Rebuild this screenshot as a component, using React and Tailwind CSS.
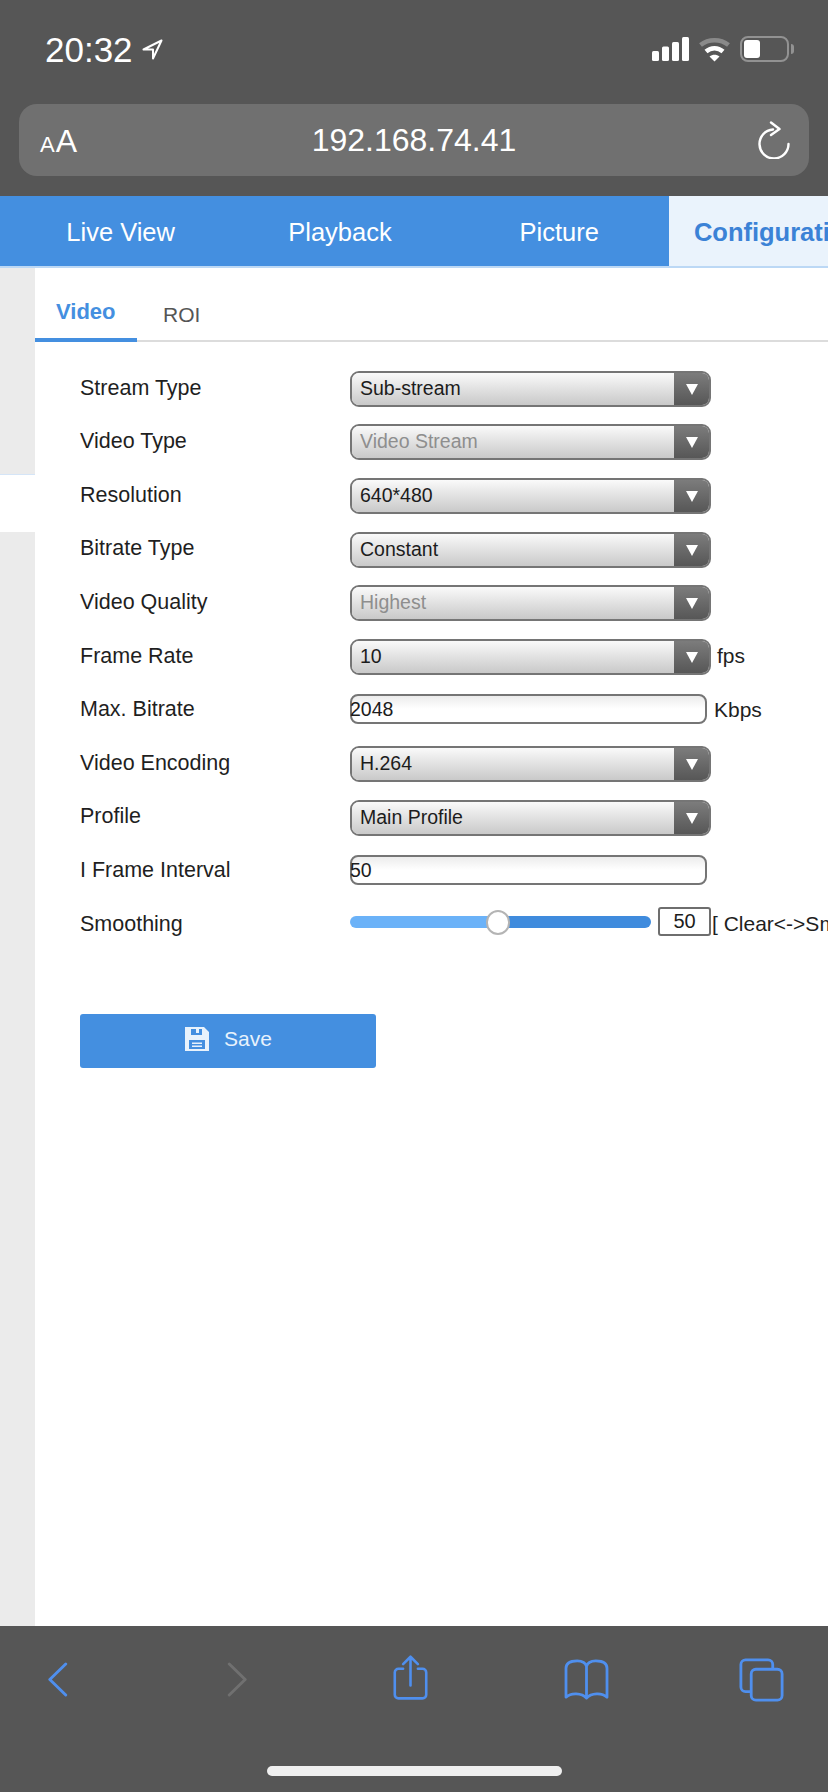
import { useState } from 'react';

const NAV = ['Live View', 'Playback', 'Picture'];

function SelectBox({ value, disabled }) {
  return (
    <div className="flex h-[36px] w-[361px] overflow-hidden rounded-[9px] border-2 border-[#757575]">
      <div className={`flex-1 bg-linear-to-b from-[#fafafa] to-[#c9c9c9] pl-[8px] text-[19.5px] leading-[31px] ${disabled ? 'text-[#8e8e8e]' : 'text-[#1c1c1c]'}`}>
        {value}
      </div>
      <div className="flex w-[35px] items-center justify-center bg-linear-to-b from-[#7c7c7c] to-[#575757] pt-[1px]">
        <svg width="14" height="13" viewBox="0 0 14 13">
          <path d="M1 1h12L7 12z" fill="#fff" />
        </svg>
      </div>
    </div>
  );
}

function TextBox({ value }) {
  return (
    <div className="mb-[2px] h-[30px] w-[357px] rounded-[8px] border-2 border-[#757575] bg-linear-to-b from-[#ececec] via-white to-white text-[19.5px] leading-[27px] text-[#1c1c1c] [text-indent:-2px]">
      {value}
    </div>
  );
}

function Row({ label, children }) {
  return (
    <div className="flex h-[53.6px] items-center">
      <div className="w-[270px] shrink-0 pb-[2px] text-[21.5px] text-[#1f1f1f]">{label}</div>
      {children}
    </div>
  );
}

function StatusBar() {
  return (
    <div className="flex h-[26px] items-center justify-between pl-[45px] pr-[34px]">
      <div className="flex items-center gap-[9px] text-white">
        <span className="text-[35px] leading-none">20:32</span>
        <svg width="21" height="21" viewBox="0 0 21 21" fill="none" stroke="#fff" strokeWidth="2" strokeLinejoin="round">
          <path d="M19.500 1.500 1.500 10.500h9.500v9z" />
        </svg>
      </div>
      <div className="flex items-center">
        <svg width="38" height="24" viewBox="0 0 38 24" fill="#fff">
          <rect x="0" y="14" width="7" height="10" rx="1.5" />
          <rect x="10" y="9.5" width="7" height="14.5" rx="1.5" />
          <rect x="20" y="5" width="7" height="19" rx="1.5" />
          <rect x="30" y="0" width="7" height="24" rx="1.5" />
        </svg>
        <svg className="ml-[8px]" width="33" height="25" viewBox="0 0 33 25" fill="none">
          <path d="M2.500 8C10.500 1.500 22.500 1.500 30.500 8" stroke="#8a8a8a" strokeWidth="4.500" />
          <path d="M8 14.500c5-4.400 12-4.400 17 0" stroke="#fff" strokeWidth="4.500" />
          <path d="M11.500 19.500 16.500 24.500l5-5c-3-2.300-7-2.300-10 0z" fill="#fff" />
        </svg>
        <div className="ml-[9px] flex h-[26px] w-[49px] items-center rounded-[8px] border-2 border-[#929292] p-[2px]">
          <div className="h-[18px] w-[16px] rounded-[3px] bg-white" />
        </div>
        <div className="ml-[2px] h-[10px] w-[3px] rounded-r-[3px] bg-[#929292]" />
      </div>
    </div>
  );
}

function Toolbar() {
  const blue = '#4f8fee';
  return (
    <div className="relative h-[166px] shrink-0 bg-[#565656]">
      <div className="flex h-[107px] items-center">
        <svg className="ml-[48px]" width="20" height="37" viewBox="0 0 22 38" fill="none" stroke={blue} strokeWidth="3.200" strokeLinecap="round" strokeLinejoin="round">
          <path d="M19.500 2 2 19l17.500 17" />
        </svg>
        <svg className="ml-[159px]" width="20" height="37" viewBox="0 0 22 38" fill="none" stroke="#707070" strokeWidth="3.200" strokeLinecap="round" strokeLinejoin="round">
          <path d="M2.500 2 20 19 2.500 36" />
        </svg>
        <svg className="ml-[145px] mb-[3px]" width="37" height="48" viewBox="0 0 40 50" fill="none" stroke={blue} strokeWidth="2.800" strokeLinecap="round" strokeLinejoin="round">
          <path d="M12 15H7a4 4 0 0 0-4 4v24a4 4 0 0 0 4 4h26a4 4 0 0 0 4-4V19a4 4 0 0 0-4-4h-5" />
          <path d="M20 33V2M12 10l8-8 8 8" />
        </svg>
        <svg className="ml-[134px]" width="47" height="41" viewBox="0 0 50 44" fill="none" stroke={blue} strokeWidth="3" strokeLinejoin="round">
          <path d="M25 8c-1-4-5-6-10-6-6 0-12 2-12 8v31c5-5 17-5 22 1 5-6 17-6 22-1V10c0-6-6-8-12-8-5 0-9 2-10 6zM25 8v34" />
        </svg>
        <svg className="ml-[129px]" width="45" height="44" viewBox="0 0 48 47" fill="none" stroke={blue} strokeWidth="3">
          <path d="M12 36H7a5 5 0 0 1-5-5V7a5 5 0 0 1 5-5h24a5 5 0 0 1 5 5v5" />
          <rect x="13" y="12" width="33" height="33" rx="5" />
        </svg>
      </div>
      <div className="mx-auto mt-[33px] h-[10px] w-[295px] rounded-full bg-[#efefef]" />
    </div>
  );
}

export default function App() {
  const [smoothing] = useState(50);

  return (
    <div className="flex h-[1792px] w-[828px] flex-col overflow-hidden bg-white font-['Liberation_Sans',Arial,sans-serif]">
      {/* safari top */}
      <div className="h-[196px] shrink-0 bg-[#565656] pt-[36px]">
        <StatusBar />
        <div className="mx-[19px] mt-[42px] flex h-[72px] items-center justify-between rounded-[18px] bg-[#707070] pl-[21px] pr-[18px] text-white">
          <div className="flex items-baseline pt-[2px]">
            <span className="text-[22px] leading-none">A</span>
            <span className="ml-[1px] text-[32px] leading-none">A</span>
          </div>
          <span className="mr-[6px] text-[32px] leading-none">192.168.74.41</span>
          <svg width="34" height="38" viewBox="0 0 34 38" fill="none" stroke="#fff" strokeWidth="2.400" strokeLinecap="round" strokeLinejoin="round">
            <path d="M16 8.500a14.500 14.500 0 1 0 15.500 14.500" />
            <path d="M14 1.500 22.500 8 14 14" />
          </svg>
        </div>
      </div>

      {/* top nav */}
      <div className="flex h-[72px] shrink-0 overflow-hidden border-b-2 border-[#bcd8f5] bg-[#448fe0] pl-[11px]">
        {NAV.map((n) => (
          <div key={n} className="w-[219.300px] shrink-0 text-center text-[25.500px] leading-[73px] text-white">
            {n}
          </div>
        ))}
        <div className="w-[218px] shrink-0 bg-[#eaf3fc] pl-[25px] text-[25.500px] font-bold leading-[73px] whitespace-nowrap text-[#3b82d6]">
          Configuration
        </div>
      </div>

      <div className="flex min-h-0 flex-1">
        {/* sidebar */}
        <div className="flex w-[35px] shrink-0 flex-col">
          <div className="h-[207px] border-b border-[#d5e5f7] bg-[#ebebeb]" />
          <div className="h-[57px] bg-white" />
          <div className="flex-1 bg-[#ebebeb]" />
        </div>

        {/* content */}
        <div className="min-w-0 flex-1 overflow-hidden">
          <div className="flex h-[74px] items-end border-b-2 border-[#dcdcdc]">
            <div className="h-[72px] w-[102px] shrink-0 -mb-[2px] border-b-4 border-[#448fe0] pl-[21px] pt-[30px] text-[22px] font-bold leading-[24px] text-[#448fe0]">
              Video
            </div>
            <div className="mb-[2px] h-[70px] pl-[26px] pt-[35px] text-[21px] leading-[24px] text-[#555]">ROI</div>
          </div>

          <div className="pl-[45px] pt-[20px]">
            <Row label="Stream Type"><SelectBox value="Sub-stream" /></Row>
            <Row label="Video Type"><SelectBox value="Video Stream" disabled /></Row>
            <Row label="Resolution"><SelectBox value="640*480" /></Row>
            <Row label="Bitrate Type"><SelectBox value="Constant" /></Row>
            <Row label="Video Quality"><SelectBox value="Highest" disabled /></Row>
            <Row label="Frame Rate">
              <SelectBox value="10" />
              <span className="ml-[6px] pb-[2px] text-[21px] text-[#1f1f1f]">fps</span>
            </Row>
            <Row label="Max. Bitrate">
              <TextBox value="2048" />
              <span className="ml-[7px] pb-[2px] text-[21px] text-[#1f1f1f]">Kbps</span>
            </Row>
            <Row label="Video Encoding"><SelectBox value="H.264" /></Row>
            <Row label="Profile"><SelectBox value="Main Profile" /></Row>
            <Row label="I Frame Interval"><TextBox value="50" /></Row>
            <Row label="Smoothing">
              <div className="relative mb-[6px] flex h-[12px] w-[301px] shrink-0">
                <div className="w-[146px] rounded-l-full bg-[#6bb2f8]" />
                <div className="flex-1 rounded-r-full bg-[#3f8bdd]" />
                <div className="absolute left-[136px] top-[-6px] h-[25px] w-[24px] rounded-full border-2 border-[#b4b4b4] bg-white" />
              </div>
              <div className="mb-[6px] ml-[7px] h-[29px] w-[53px] shrink-0 rounded-[3px] border-2 border-[#6e6e6e] text-center text-[20px] leading-[25px] text-[#1c1c1c]">
                {smoothing}
              </div>
              <span className="ml-[1px] pb-[2px] whitespace-nowrap text-[21px] text-[#1f1f1f]">[ Clear&lt;-&gt;Smooth ]</span>
            </Row>

            <button className="mt-[62px] flex h-[54px] w-[296px] items-center justify-center gap-[14px] rounded-[3px] bg-[#448fe0] pb-[3px] text-[21px] text-[#e8f2fc]">
              <svg width="26" height="26" viewBox="0 0 26 26">
                <path fillRule="evenodd" fill="#e8f2fc" d="M1 1h19l5 5v19H1zM7 3v6h11V3h-3v4h-3V3zM5 14v9h16v-9zM8 16.500h10v1.500H8zM8 19.500h10V21H8z" />
              </svg>
              Save
            </button>
          </div>
        </div>
      </div>

      <Toolbar />
    </div>
  );
}
